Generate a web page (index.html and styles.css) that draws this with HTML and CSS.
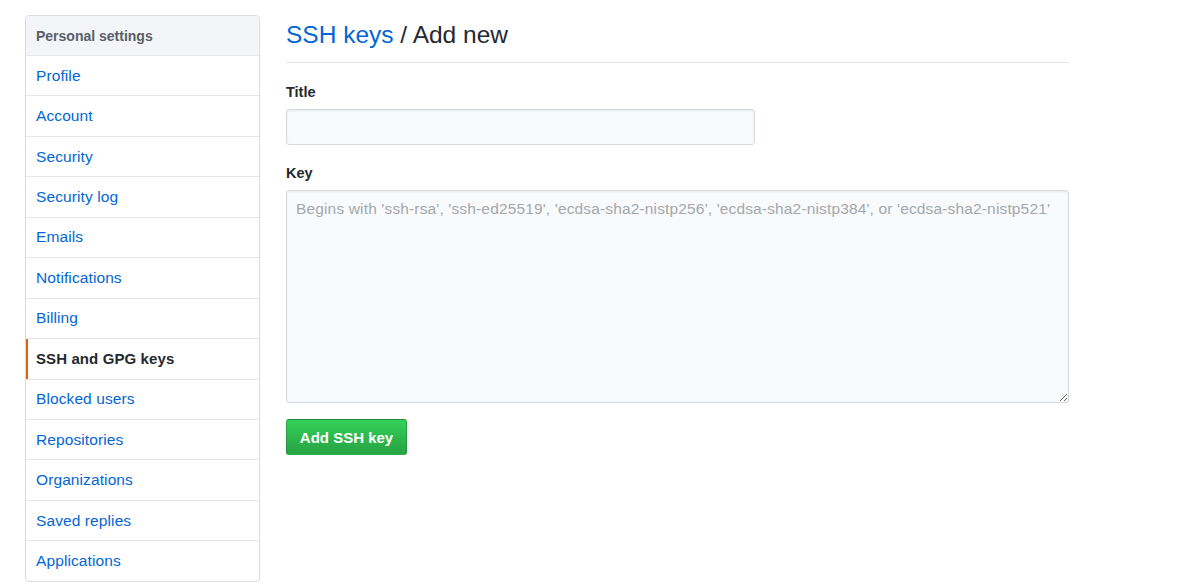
FILE: index.html
```html
<!DOCTYPE html>
<html>
<head>
<meta charset="utf-8">
<link rel="stylesheet" href="styles.css">
</head>
<body>
<div class="page">
  <nav class="menu">
    <div class="menu-heading">Personal settings</div>
    <a class="menu-item" href="#">Profile</a>
    <a class="menu-item" href="#">Account</a>
    <a class="menu-item" href="#">Security</a>
    <a class="menu-item" href="#">Security log</a>
    <a class="menu-item" href="#">Emails</a>
    <a class="menu-item" href="#">Notifications</a>
    <a class="menu-item" href="#">Billing</a>
    <a class="menu-item selected" href="#">SSH and GPG keys</a>
    <a class="menu-item" href="#">Blocked users</a>
    <a class="menu-item" href="#">Repositories</a>
    <a class="menu-item" href="#">Organizations</a>
    <a class="menu-item" href="#">Saved replies</a>
    <a class="menu-item" href="#">Applications</a>
  </nav>
  <main class="content">
    <h2 class="subhead"><a href="#">SSH keys</a> / Add new</h2>
    <form class="form">
      <label class="label">Title</label>
      <input class="input title-input" type="text">
      <label class="label key-label">Key</label>
      <textarea class="input key-input" placeholder="Begins with 'ssh-rsa', 'ssh-ed25519', 'ecdsa-sha2-nistp256', 'ecdsa-sha2-nistp384', or 'ecdsa-sha2-nistp521'"></textarea>
      <div class="actions"><button class="btn" type="button">Add SSH key</button></div>
    </form>
  </main>
</div>
</body>
</html>
```
FILE: styles.css
```css
* { box-sizing: border-box; }
html, body { margin: 0; padding: 0; background: #fff; }
body {
  font-family: "Liberation Sans", Arial, sans-serif;
  color: #24292e;
  font-size: 15px;
}
.page {
  display: flex;
  align-items: flex-start;
  padding: 15px 0 0 25px;
  gap: 26px;
}
.menu {
  width: 235px;
  flex: none;
  border: 1px solid #d8dde2;
  border-radius: 4px;
  display: flex;
  flex-direction: column;
  overflow: hidden;
  box-shadow: 0 1px 1px rgba(27,31,35,0.04);
}
.menu-heading {
  height: 39px;
  display: flex;
  align-items: center;
  padding: 0 10px;
  background: #f3f5f8;
  color: #586069;
  font-weight: bold;
  font-size: 14px;
}
.menu-item {
  height: 40.45px;
  display: flex;
  align-items: center;
  padding: 0 10px;
  border-top: 1px solid #e4e7eb;
  color: #0366d6;
  text-decoration: none;
  font-size: 15.5px;
  letter-spacing: 0.1px;
}
.menu-item.selected {
  color: #24292e;
  font-weight: bold;
  font-size: 15px;
  box-shadow: inset 2px 0 0 #e36209;
}
.content {
  width: 783px;
  flex: none;
}
.subhead {
  margin: 3px 0 0;
  padding-bottom: 10px;
  border-bottom: 1px solid #e1e4e8;
  font-size: 24.5px;
  font-weight: normal;
  line-height: 34px;
  color: #24292e;
}
.subhead a { color: #0366d6; text-decoration: none; }
.form { display: flex; flex-direction: column; align-items: flex-start; }
.label {
  font-weight: bold;
  font-size: 14.5px;
  margin-top: 20px;
  line-height: 18px;
}
.key-label { margin-top: 19px; }
.input {
  font-family: "Liberation Sans", Arial, sans-serif;
  background: #f9fafb;
  border: 1px solid #d6dadf;
  border-radius: 3px;
  box-shadow: inset 0 1px 2px rgba(27,31,35,0.075);
  outline: none;
  color: #24292e;
}
.title-input {
  margin-top: 8px;
  width: 469px;
  height: 36px;
}
.key-input {
  margin-top: 8px;
  width: 783px;
  height: 213px;
  padding: 8px 9px;
  font-size: 15.5px;
  letter-spacing: 0.15px;
  line-height: 20px;
  resize: vertical;
  display: block;
}
.key-input::placeholder { color: #a3a8ae; }
.actions { margin-top: 16px; }
.btn {
  font-family: "Liberation Sans", Arial, sans-serif;
  width: 121px;
  height: 36px;
  border: 1px solid rgba(27,31,35,0.2);
  border-radius: 3px;
  background: linear-gradient(-180deg, #34d058 0%, #28a745 90%);
  color: #fff;
  font-weight: bold;
  font-size: 15px;
  padding: 0;
}
```
